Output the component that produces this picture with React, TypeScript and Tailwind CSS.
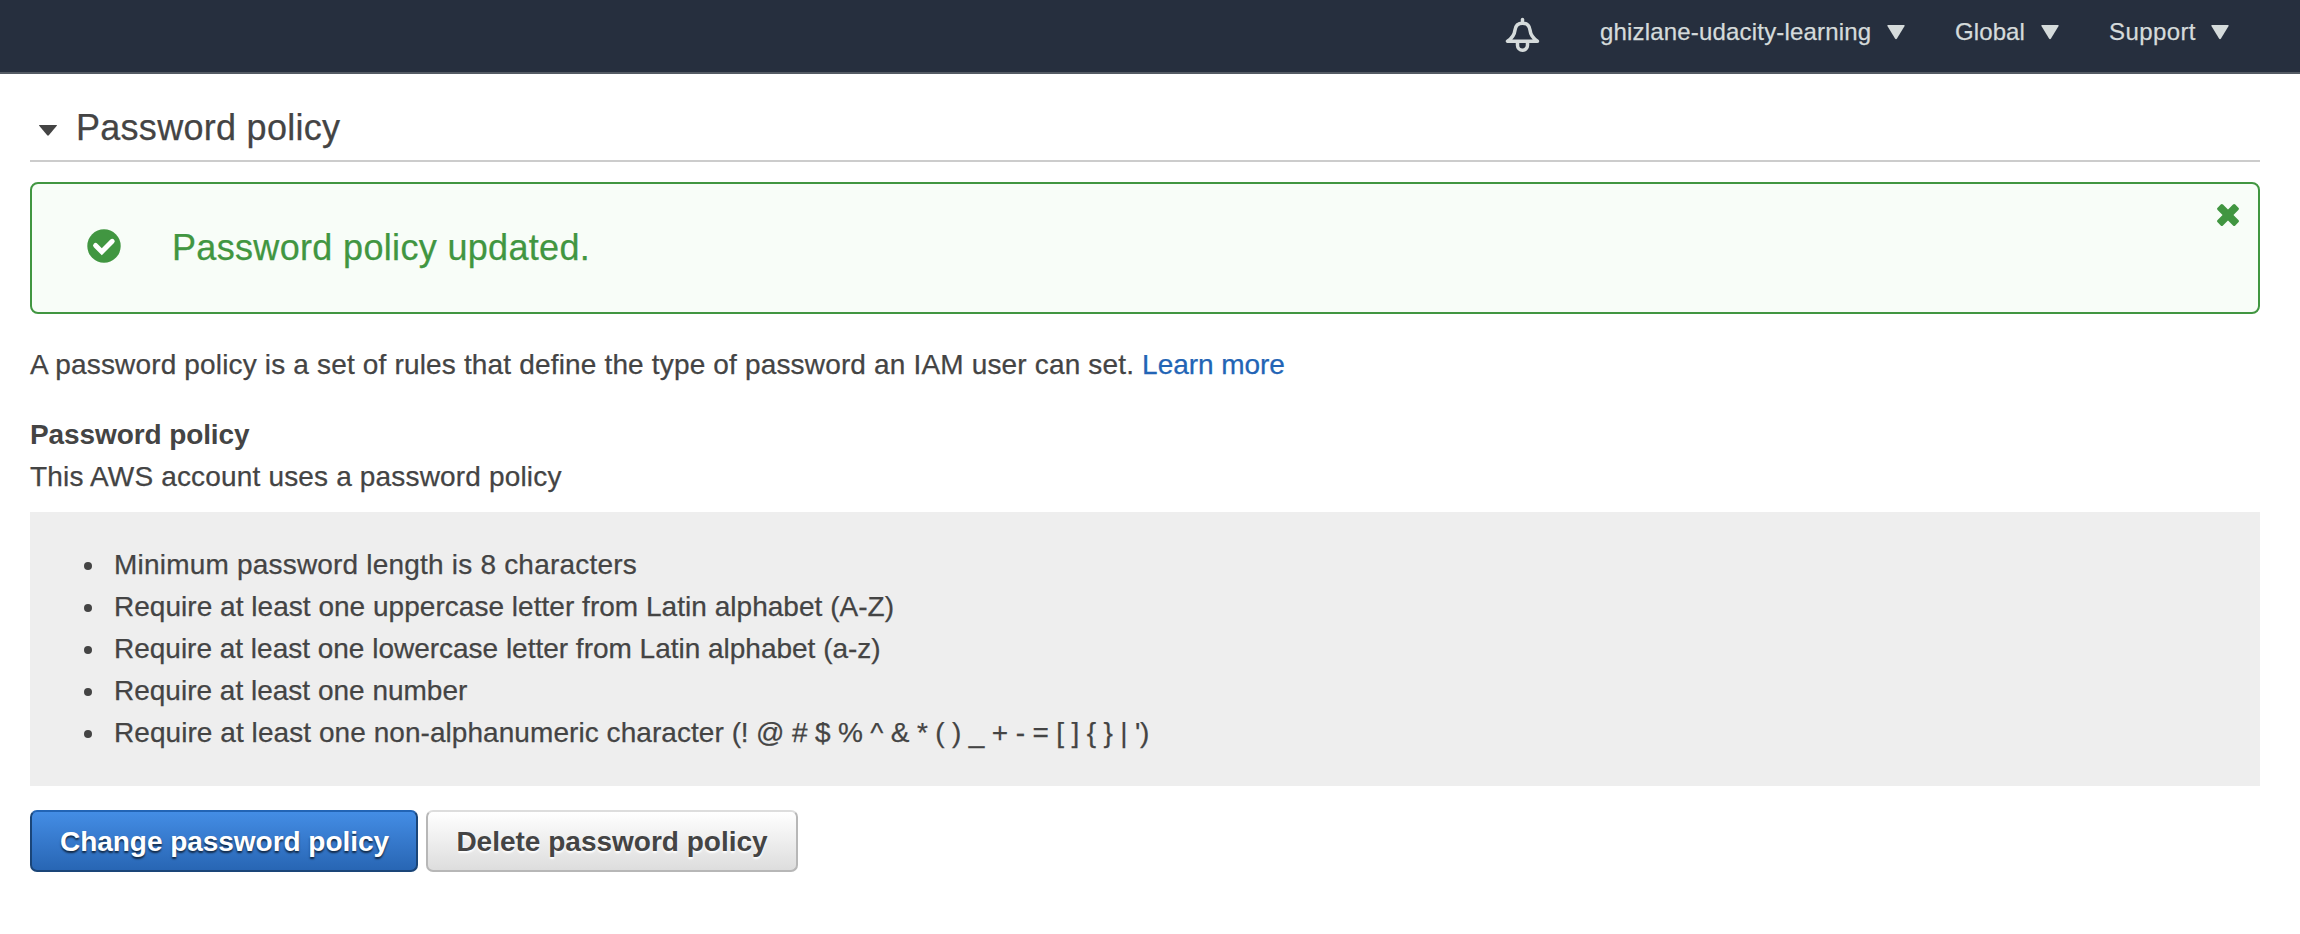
import React from "react";

const rules = [
  { text: "Minimum password length is 8 characters", spacing: "tracking-[0.2px]" },
  { text: "Require at least one uppercase letter from Latin alphabet (A-Z)", spacing: "tracking-[0.03px]" },
  { text: "Require at least one lowercase letter from Latin alphabet (a-z)", spacing: "tracking-[-0.01px]" },
  { text: "Require at least one number", spacing: "tracking-normal" },
  {
    text: "Require at least one non-alphanumeric character ",
    symbols: "(! @ # $ % ^ & * ( ) _ + - = [ ] { } | ')",
    spacing: "tracking-[0.06px]",
  },
];

function NavItem({ label, className }: { label: string; className: string }) {
  return (
    <button className={`mt-[18px] flex items-center justify-between ${className}`}>
      <span className="whitespace-nowrap">{label}</span>
      <svg width="18" height="16" viewBox="0 0 18 16" fill="#d5dbdb">
        <path d="M1 1h16q1 0 .6 1L10 14.600q-1 1.200-2 0L.4 2Q0 1 1 1z" />
      </svg>
    </button>
  );
}

export default function App() {
  return (
    <div className="h-[934px] w-[2300px] overflow-hidden bg-white font-['Liberation_Sans',Arial,sans-serif] text-[28px] leading-[42px] text-[#444] [-webkit-text-stroke:0.25px]">
      <header className="flex h-[74px] items-start justify-end border-b-2 border-[#545b64] bg-[#262f3e] pr-[71px] text-[24px] leading-[28px] text-[#d5dbdb]">
        <svg className="mt-[16px] mr-[60px]" width="36" height="38" viewBox="0 0 36 38" fill="none" stroke="#d5dbdb" strokeWidth="3.5" strokeLinejoin="round" strokeLinecap="round">
          <path d="M18.500 3.500v3" />
          <path d="M18.500 7.200C13.500 7.200 11.500 10 11 14c-.5 4.500-2.500 8-7.500 11.200h30C28.500 22 26.500 18.500 26 14c-.5-4-2.500-6.800-7.500-6.800z" />
          <path d="M13.500 27v2.200a5 5 0 0 0 10 0V27" />
        </svg>
        <NavItem label="ghizlane-udacity-learning" className="w-[305px] tracking-[0.18px]" />
        <NavItem label="Global" className="ml-[50px] w-[104px] tracking-[0.1px]" />
        <NavItem label="Support" className="ml-[50px] w-[120px] tracking-[0.4px]" />
      </header>

      <main className="pr-[40px] pl-[30px]">
        <h1 className="flex h-[88px] items-start border-b-2 border-[#ccc] pt-[33px] pl-[9px] text-[36px] tracking-[0.28px]">
          <svg className="mt-[18px]" width="18" height="11" viewBox="0 0 18 11" fill="#444">
            <path d="M.5 0h17q.8 0 .3.700L9.800 10.300q-.8.900-1.600 0L.2.700Q-.3 0 .5 0z" />
          </svg>
          <span className="ml-[19px]">Password policy</span>
        </h1>

        <section className="mt-[20px] flex h-[132px] items-start rounded-[8px] border-2 border-[#419641] bg-[#f8fdf8] text-[36px] text-[#419641]">
          <svg className="mt-[45px] ml-[55px]" width="34" height="34" viewBox="0 0 34 34">
            <circle cx="17" cy="17" r="16.700" fill="#419641" />
            <path d="M8.600 16.500l6.200 6.200L25.200 12.300" fill="none" stroke="#fff" strokeWidth="5" strokeLinecap="round" />
          </svg>
          <p className="mt-[43px] ml-[51px] flex-1 tracking-[0.33px]">Password policy updated.</p>
          <svg className="mt-[20px] mr-[19px]" width="22" height="22" viewBox="0 0 22 22" fill="#419641">
            <rect x="-1.500" y="7.200" width="25" height="7.600" rx="1.600" transform="rotate(45 11 11)" />
            <rect x="-1.500" y="7.200" width="25" height="7.600" rx="1.600" transform="rotate(-45 11 11)" />
          </svg>
        </section>

        <p className="mt-[30px] tracking-[0.165px]">
          A password policy is a set of rules that define the type of password an IAM user can set.{" "}
          <a className="tracking-[-0.05px] text-[#2264b5]">Learn more</a>
        </p>

        <h2 className="mt-[28px] font-bold tracking-[-0.1px] [-webkit-text-stroke:0]">Password policy</h2>
        <p className="tracking-[0.17px]">This AWS account uses a password policy</p>

        <ul className="mt-[14px] h-[274px] bg-[#eee] pt-[32px] pl-[54px]">
          {rules.map((rule) => (
            <li key={rule.text} className={`flex items-center ${rule.spacing}`}>
              <span className="mt-[2px] mr-[22px] size-[8px] rounded-full bg-[#444]" />
              <span className="whitespace-pre">
                {rule.text}
                {rule.symbols && <span className="tracking-[-0.17px]">{rule.symbols}</span>}
              </span>
            </li>
          ))}
        </ul>

        <div className="mt-[24px] flex gap-[8px] font-bold [-webkit-text-stroke:0]">
          <button className="h-[62px] w-[388px] rounded-[7px] border-2 border-[#1a4578] border-t-[#2264b5] bg-linear-to-b from-[#448de5] to-[#2866b4] pt-[2px] pl-px tracking-[-0.04px] whitespace-nowrap text-white [text-shadow:0_2px_2px_#000a]">
            Change password policy
          </button>
          <button className="h-[62px] w-[372px] rounded-[7px] border-2 border-[#b7b7b7] border-t-[#ddd] bg-linear-to-b from-white to-[#ddd] pt-[2px] whitespace-nowrap text-[#444] [text-shadow:0_2px_2px_#fff]">
            Delete password policy
          </button>
        </div>
      </main>
    </div>
  );
}
